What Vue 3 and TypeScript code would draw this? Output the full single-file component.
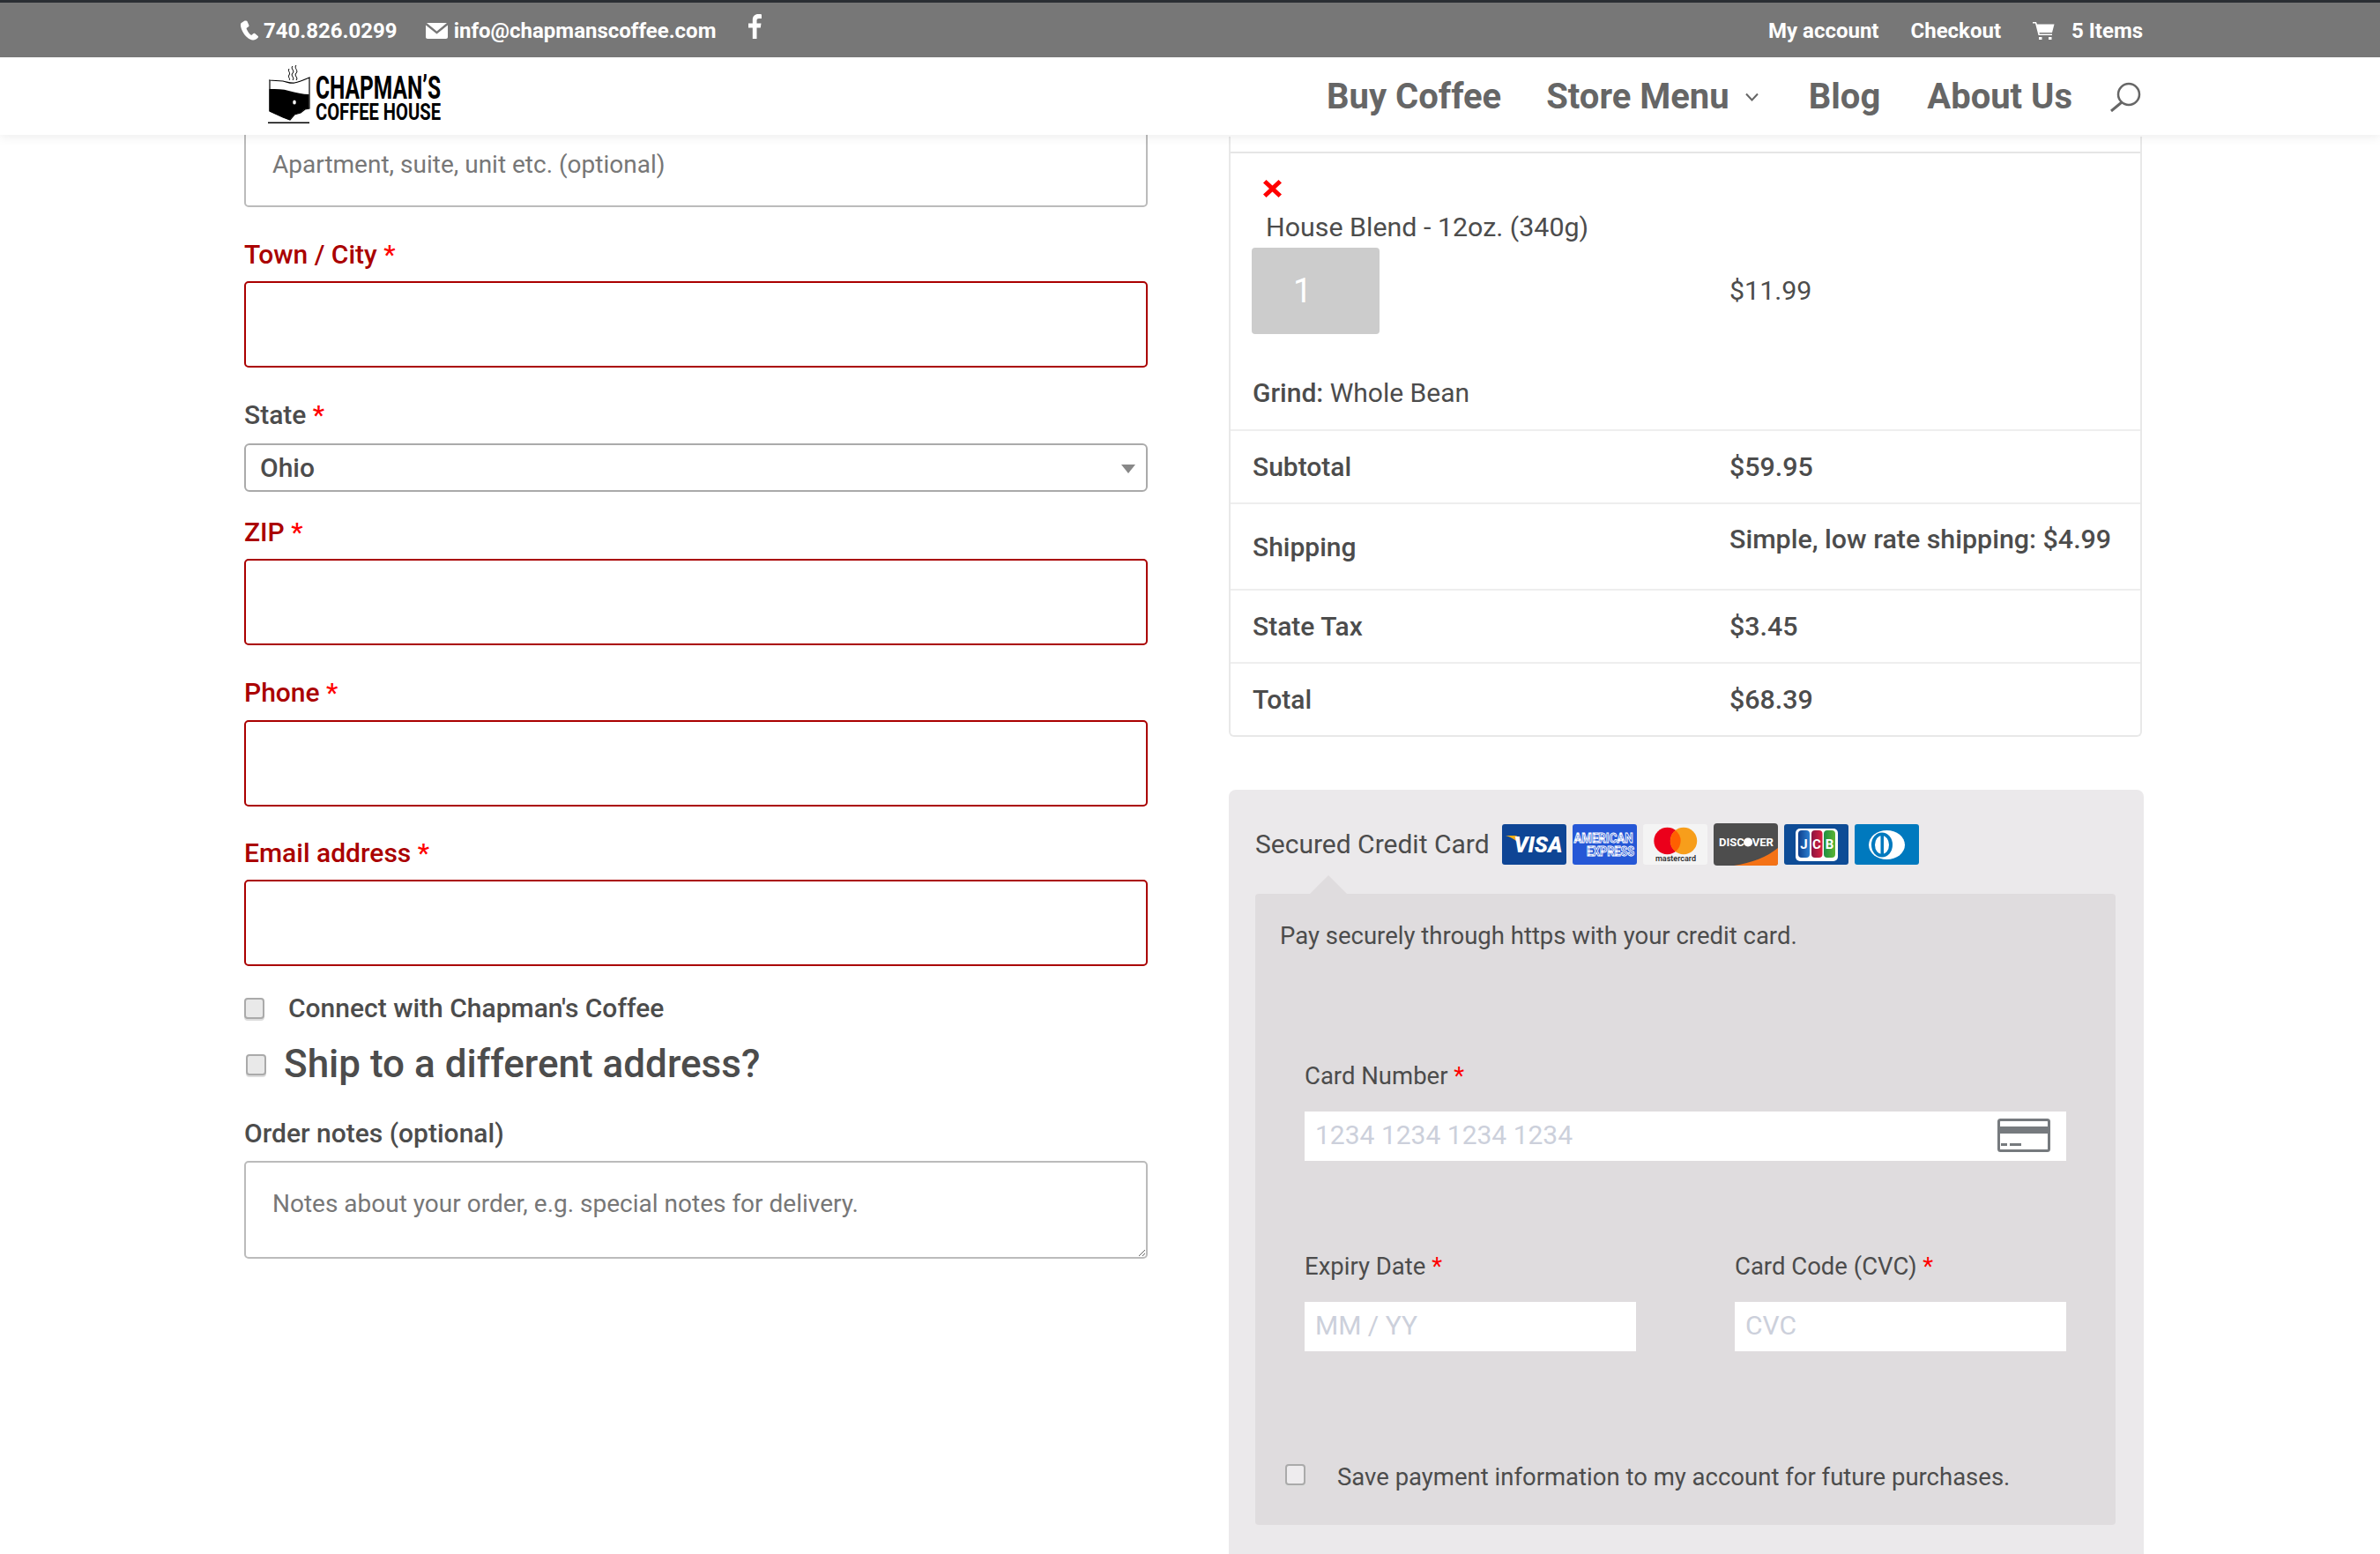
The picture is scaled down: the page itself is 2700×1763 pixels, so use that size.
<script setup lang="ts">
interface Field {
  id: string;
  label: string;
  cls: string;
}

const contactFields: Field[] = [
  { id: 'zip', label: 'ZIP', cls: 'f-zip' },
  { id: 'phone', label: 'Phone', cls: '' },
  { id: 'email', label: 'Email address', cls: 'f-email' },
];

const navLinks = ['Buy Coffee', 'Store Menu', 'Blog', 'About Us'];

const totals = [
  { label: 'Subtotal', value: '$59.95', cls: 'r-sub' },
  { label: 'Shipping', value: 'Simple, low rate shipping: $4.99', cls: 'r-ship' },
  { label: 'State Tax', value: '$3.45', cls: 'r-tax' },
  { label: 'Total', value: '$68.39', cls: 'r-total' },
];
</script>

<template>
  <div class="app">
    <header class="site-head">
      <div class="topbar">
        <div class="top-left">
          <span class="contact phone">
            <svg width="23" height="23" viewBox="0 0 24 24"><path fill="#fff" d="M5 1 1.500 3.500C.5 5 1 9 3.500 13.500 6.500 19 11 23 15.500 23.500c2 .2 4-.8 6-2.800.7-.7.6-1.500-.2-2.200l-3.300-2.800c-.8-.6-1.500-.5-2.200.2l-1.300 1.300c-.5.4-1 .4-1.500 0-2-1.500-4-4.500-5-7-.2-.6 0-1 .5-1.300l1.600-1c.8-.5 1-1.200.7-2.100L9 1.500C8.500.5 6.500 0 5 1Z"/></svg>
            740.826.0299
          </span>
          <span class="contact mail">
            <svg width="25" height="18" viewBox="0 0 25 18"><path fill="#fff" d="M1 0h23l-11.500 9.500L1 0Zm-1 2.500V16c0 1.100.9 2 2 2h21c1.100 0 2-.9 2-2V2.500l-12.500 10L0 2.500Z"/></svg>
            info@chapmanscoffee.com
          </span>
          <svg class="fb" width="16" height="28" viewBox="0 0 16 28"><path fill="#fff" d="M10.500 28V15.500h4.300l.7-5h-5V7.300c0-1.400.4-2.400 2.500-2.400H16V.4C15.500.3 14 .1 12.200.1 8.400.1 5.800 2.400 5.800 6.700v3.800H1v5h4.800V28h4.700Z"/></svg>
        </div>
        <div class="top-right">
          <span>My account</span>
          <span>Checkout</span>
          <span class="cart">
            <svg width="25" height="20" viewBox="0 0 25 20"><path fill="#fff" d="M0 0h4l1 2.500h19.500L22 12H7.500l.3 1.500H22V15H6.500L3 1.500H0V0Z"/><rect x="7" y="17" width="3.500" height="3" fill="#fff"/><rect x="18" y="17" width="3.500" height="3" fill="#fff"/></svg>
            5 Items
          </span>
        </div>
      </div>
      <div class="mainbar">
        <svg class="logo" width="198" height="70" viewBox="0 0 198 70">
          <path fill="none" stroke="#000" stroke-width="1" d="M28 1c-3 3 3 5 0 8s3 5 0 8M32 0c-3 3 3 6 0 9s3 5 0 8M24 4c-2 3 2 4 0 7s2 4 0 6" />
          <path fill="#fff" stroke="#000" stroke-width="1.200" d="M1 17l16 1c5 1 9 3 13 2 5-1 10-3 17-6v35l-5 1-5 4-7 2-5 6-8-3-15-7V17Z" />
          <path fill="#000" d="M1.500 27c8 0 16 0 22 2 8 2 16 4 23 4v16l-5 1-5 4-7 2-5 6-8-3-15-7V27Z" />
          <ellipse cx="30" cy="42" rx="1.800" ry="2.500" fill="#fff" />
          <path fill="#000" d="M0 64.500h47V66H0Z" />
          <text class="logo-a" x="54" y="38" textLength="142" lengthAdjust="spacingAndGlyphs">CHAPMAN’S</text>
          <text class="logo-b" x="54" y="62" textLength="142" lengthAdjust="spacingAndGlyphs">COFFEE HOUSE</text>
        </svg>
        <nav class="nav">
          <a v-for="link in navLinks" :key="link" class="nav-link">
            {{ link }}
            <svg v-if="link === 'Store Menu'" class="chev" width="17" height="10" viewBox="0 0 17 10"><path fill="none" stroke="#666" stroke-width="2" d="m2 1.500 6.500 7 6.500-7" /></svg>
          </a>
          <svg class="search" width="37" height="34" viewBox="0 0 37 34"><circle cx="22" cy="14" r="12" fill="none" stroke="#666" stroke-width="2.500"/><path stroke="#666" stroke-width="3" d="M14 23 2 33"/></svg>
        </nav>
      </div>
    </header>

    <main class="page">
      <section class="billing">
        <input class="text-in apt" placeholder="Apartment, suite, unit etc. (optional)" readonly />

        <div class="field f-town">
          <label class="lbl bad">Town / City <i>*</i></label>
          <input class="text-in bad-in" readonly />
        </div>
        <div class="field f-state">
          <label class="lbl">State <i>*</i></label>
          <div class="select-wrap">
            <select class="sel"><option>Ohio</option></select>
            <span class="sel-arrow"></span>
          </div>
        </div>
        <div v-for="f in contactFields" :key="f.id" class="field" :class="f.cls">
          <label class="lbl bad">{{ f.label }} <i>*</i></label>
          <input class="text-in bad-in" readonly />
        </div>

        <label class="check-row connect"><input type="checkbox" class="cb" />Connect with Chapman's Coffee</label>
        <h3 class="ship"><input type="checkbox" class="cb" />Ship to a different address?</h3>

        <div class="field f-notes">
          <label class="lbl">Order notes (optional)</label>
          <textarea class="notes" placeholder="Notes about your order, e.g. special notes for delivery." readonly></textarea>
        </div>
      </section>

      <section class="order">
        <div class="table">
          <div class="row-item">
            <svg class="remove" width="21" height="20" viewBox="0 0 21 20"><path fill="#f00" d="M0 3.500 3.500 0l7 6.500 7-6.500L21 3.500 14 10l7 6.500-3.500 3.500-7-6.500-7 6.500L0 16.500 7 10 0 3.500Z"/></svg>
            <div class="item-name">House Blend - 12oz. (340g)</div>
            <div class="item-line">
              <div class="qty">1</div>
              <div class="price">$11.99</div>
            </div>
            <div class="grind"><b>Grind:</b> Whole Bean</div>
          </div>
          <div v-for="r in totals" :key="r.label" class="row" :class="r.cls">
            <b class="r-label">{{ r.label }}</b>
            <b class="r-value">{{ r.value }}</b>
          </div>
        </div>

        <div class="pay">
          <div class="pay-head">
            <span class="pay-title">Secured Credit Card</span>
            <div class="cards">
              <svg class="card" viewBox="0 0 73 46"><rect width="73" height="46" rx="3" fill="#0e4595"/><path d="M4 13h11c2 0 3 1 3 3l2 7c-3-4-9-8-16-10Z" fill="#f2ae14"/><text class="t-visa" x="41" y="32" text-anchor="middle" textLength="55" lengthAdjust="spacingAndGlyphs">VISA</text></svg>
              <svg class="card" viewBox="0 0 73 46"><rect width="73" height="46" rx="3" fill="#2557d6"/><text class="t-amex" x="35" y="21" text-anchor="middle" textLength="67" lengthAdjust="spacingAndGlyphs">AMERICAN</text><text class="t-amex" x="43" y="36" text-anchor="middle" textLength="54" lengthAdjust="spacingAndGlyphs">EXPRESS</text></svg>
              <svg class="card" viewBox="0 0 73 46"><rect width="73" height="46" rx="3" fill="#f4f4f4"/><circle cx="27.500" cy="19" r="15.200" fill="#eb001b"/><circle cx="46" cy="19" r="15.200" fill="#f79e1b"/><path d="M36.750 7a15.200 15.200 0 0 1 0 24 15.200 15.200 0 0 1 0-24Z" fill="#ff5f00"/><text class="t-mc" x="37" y="42" text-anchor="middle" textLength="46" lengthAdjust="spacingAndGlyphs">mastercard</text></svg>
              <svg class="card tall" viewBox="0 0 73 48"><rect width="73" height="48" rx="4" fill="#4d4d4d"/><path d="M23 48c20-3 38-10 50-20v17c0 2-1 3-3 3H23Z" fill="#f47216"/><text class="t-disc" x="37" y="26" text-anchor="middle" textLength="62" lengthAdjust="spacingAndGlyphs">DISCOVER</text><circle cx="39" cy="21.500" r="5" fill="#fff"/></svg>
              <svg class="card" viewBox="0 0 73 46"><defs><linearGradient id="jb" x1="0" x2="1"><stop offset="0" stop-color="#0e3f8c"/><stop offset="1" stop-color="#2b7fd0"/></linearGradient><linearGradient id="jr" x1="0" x2="1"><stop offset="0" stop-color="#8c1440"/><stop offset="1" stop-color="#d81f3f"/></linearGradient><linearGradient id="jg" x1="0" x2="1"><stop offset="0" stop-color="#1f8f45"/><stop offset="1" stop-color="#5cb531"/></linearGradient></defs><rect width="73" height="46" rx="3" fill="#0e4c96"/><rect x="13" y="5" width="48" height="37" rx="5" fill="#fff"/><rect x="16" y="7" width="13" height="31" rx="4" fill="url(#jb)"/><rect x="31" y="7" width="12.500" height="31" rx="4" fill="url(#jr)"/><rect x="45" y="7" width="13" height="31" rx="4" fill="url(#jg)"/><text class="t-jcb" y="28" text-anchor="middle" x="22.500 37 51.500">JCB</text></svg>
              <svg class="card" viewBox="0 0 73 46"><rect width="73" height="46" rx="3" fill="#0079be"/><ellipse cx="36.500" cy="23.500" rx="20.500" ry="16.500" fill="#fff"/><ellipse cx="31" cy="23.500" rx="12" ry="14" fill="#0079be"/><ellipse cx="31" cy="23.500" rx="8" ry="10.500" fill="#fff"/><rect x="29.500" y="11" width="3.500" height="25" fill="#0079be"/></svg>
            </div>
          </div>
          <div class="pay-box">
            <p class="pay-note">Pay securely through https with your credit card.</p>
            <div class="cc-num">
              <label class="cc-lbl">Card Number <i>*</i></label>
              <div class="cc-in-wrap">
                <input class="cc-in" placeholder="1234 1234 1234 1234" readonly />
                <svg class="cc-icon" width="60" height="38" viewBox="0 0 60 38"><rect x="1.500" y="1.500" width="57" height="35" rx="2" fill="#fff" stroke="#767a7e" stroke-width="3"/><rect x="2" y="9" width="56" height="8" fill="#767a7e"/><rect x="4" y="28" width="7" height="3" fill="#767a7e"/><rect x="14" y="28" width="13" height="3" fill="#767a7e"/></svg>
              </div>
            </div>
            <div class="cc-pair">
              <div>
                <label class="cc-lbl">Expiry Date <i>*</i></label>
                <input class="cc-in" placeholder="MM / YY" readonly />
              </div>
              <div>
                <label class="cc-lbl">Card Code (CVC) <i>*</i></label>
                <input class="cc-in" placeholder="CVC" readonly />
              </div>
            </div>
            <label class="save"><input type="checkbox" class="cb" />Save payment information to my account for future purchases.</label>
          </div>
        </div>
      </section>
    </main>
  </div>
</template>

<style>
html, body {
  margin: 0;
  background: #fff;
  overflow: hidden;
}
</style>

<style scoped>
.app {
  width: 2700px;
  height: 1763px;
  overflow: hidden;
  font-family: Roboto, "Liberation Sans", sans-serif;
  font-size: 30px;
  color: #4c4c4c;
  display: flex;
  flex-direction: column;
}

.site-head {
  position: relative;
  z-index: 5;
  flex: none;
  box-shadow: 0 2px 12px rgba(0, 0, 0, 0.08);
  background: #fff;
}

.topbar {
  height: 61px;
  border-top: 3px solid #2a2e33;
  background: #777;
  color: #fff;
  font-size: 24px;
  font-weight: 700;
  display: flex;
  justify-content: space-between;
  align-items: center;
  padding: 1px 269px 0 272px;
}

.top-left, .top-right {
  display: flex;
  align-items: center;
}

.contact {
  display: flex;
  align-items: center;
  gap: 4px;
}

.mail {
  margin-left: 32px;
  gap: 7px;
}

.fb {
  margin-left: 36px;
  margin-top: -9px;
}

.top-right {
  gap: 36px;
}

.cart {
  display: flex;
  align-items: center;
  gap: 19px;
}

.mainbar {
  height: 88px;
  display: flex;
  justify-content: space-between;
  align-items: center;
  padding: 0 270px 0 304px;
}

.logo {
  overflow: visible;
}

.logo-a {
  font-size: 36px;
  font-weight: 700;
  fill: #000;
}

.logo-b {
  font-size: 25px;
  font-weight: 700;
  fill: #000;
}

.nav {
  display: flex;
  align-items: center;
  font-size: 40px;
  font-weight: 700;
  color: #666;
  padding-top: 1px;
}

.nav-link {
  margin-right: 53px;
  display: flex;
  align-items: center;
}

.nav-link:first-child {
  margin-right: 51px;
}

.chev {
  margin-left: 17px;
  margin-right: 3px;
}

.search {
  margin-left: -11px;
}

.page {
  flex: 1;
  min-height: 0;
  padding-left: 277px;
  display: grid;
  grid-template-columns: 1025px 1038px;
  column-gap: 92px;
  overflow: hidden;
}

.billing {
  margin-top: -20px;
}

.text-in {
  display: block;
  width: 100%;
  box-sizing: border-box;
  height: 98px;
  border: 2px solid #bbb;
  border-radius: 5px;
  padding: 0 30px;
  font: inherit;
  font-size: 28px;
  color: inherit;
  background: #fff;
  outline: none;
}

.text-in::placeholder, .notes::placeholder {
  color: #777;
  opacity: 1;
}

.apt {
  height: 102px;
  padding-top: 4px;
}

.bad-in {
  border-color: #a00;
}

.field {
  margin-top: 31px;
}

.f-town {
  margin-top: 31px;
}

.f-town .lbl {
  margin-bottom: 8px;
}

.f-state {
  margin-top: 31px;
}

.f-state .lbl {
  margin-bottom: 10px;
}

.f-zip {
  margin-top: 23px;
}

.f-zip .lbl {
  margin-bottom: 8px;
}

.f-email {
  margin-top: 30px;
}

.f-email .lbl {
  margin-bottom: 8px;
}

.f-notes {
  margin-top: 26px;
}

.lbl {
  display: block;
  line-height: 45px;
  margin-bottom: 9px;
  font-weight: 500;
}

.lbl i, .cc-lbl i {
  font-style: normal;
  color: #f00;
}

.lbl.bad {
  color: #a00;
}

.select-wrap {
  position: relative;
}

.sel {
  display: block;
  width: 100%;
  height: 55px;
  box-sizing: border-box;
  appearance: none;
  border: 2px solid #aaa;
  border-radius: 6px;
  padding: 0 16px;
  background: #fff;
  font: inherit;
  font-size: 30px;
  font-weight: 500;
  color: inherit;
}

.sel-arrow {
  position: absolute;
  right: 14px;
  top: 24px;
  border-style: solid;
  border-width: 10px 8px 0;
  border-color: #888 transparent transparent;
}

.cb {
  appearance: none;
  margin: 0;
  flex: none;
  width: 23px;
  height: 24px;
  box-sizing: border-box;
  border: 2px solid #aaa;
  border-radius: 4px;
  background: #e9e9e9;
  box-shadow: 0 2px 0 #ddd;
}

.check-row {
  display: flex;
  align-items: center;
  gap: 27px;
  margin-top: 31px;
  font-weight: 500;
  line-height: 34px;
}

.ship {
  display: flex;
  align-items: center;
  gap: 20px;
  margin: 16px 0 0 2px;
  font-size: 44px;
  line-height: 60px;
  font-weight: 500;
}

.ship .cb {
  margin-top: 2px;
}

.notes {
  display: block;
  width: 100%;
  height: 111px;
  box-sizing: border-box;
  border: 2px solid #bbb;
  border-radius: 5px;
  padding: 30px;
  font: inherit;
  color: inherit;
  font-size: 28px;
  line-height: 34px;
  font-weight: 400;
  outline: none;
}

.table {
  border: 2px solid #e8e8e8;
  border-top: 0;
  border-radius: 0 0 6px 6px;
  padding-top: 17px;
  width: 1032px;
  margin-top: 2px;
}

.row-item {
  border-top: 2px solid #e5e5e5;
  height: 313px;
  padding-left: 25px;
  position: relative;
}

.remove {
  display: block;
  margin: 30px 0 0 12px;
}

.item-name {
  margin: 14px 0 0 15px;
  line-height: 40px;
  font-size: 30.4px;
}

.item-line {
  display: grid;
  grid-template-columns: 541px 1fr;
  align-items: center;
  margin-top: 3px;
}

.qty {
  width: 145px;
  height: 98px;
  background: #ccc;
  border-radius: 4px;
  color: #fff;
  font-size: 38px;
  line-height: 98px;
  padding-left: 47px;
  box-sizing: border-box;
  margin-left: -1px;
}

.price {
  font-size: 30.4px;
  margin-top: -2px;
}

.grind {
  margin-top: 47px;
  line-height: 40px;
}

.grind b, .row b {
  font-weight: 500;
}

.row {
  border-top: 2px solid #eee;
  display: grid;
  grid-template-columns: 541px 1fr;
  padding-left: 25px;
  align-items: center;
  height: 81px;
}

.r-value {
  font-size: 30.4px;
}

.r-ship {
  height: 96px;
}

.r-ship .r-value {
  align-self: start;
  margin-top: 22px;
}

.pay {
  margin-top: 60px;
  background: #ebe9eb;
  border-radius: 8px;
  padding: 0 32px 40px 30px;
  height: 900px;
  box-sizing: border-box;
}

.pay-head {
  display: flex;
  align-items: center;
  padding-top: 39px;
  padding-bottom: 33px;
  height: 46px;
}

.pay-title {
  font-size: 30px;
  margin-right: 14px;
  margin-top: -2px;
}

.cards {
  display: flex;
  gap: 7px;
}

.card {
  display: block;
  width: 73px;
  height: 46px;
}

.card.tall {
  height: 48px;
  margin-top: -1px;
}

.t-visa {
  font: italic 900 26px Roboto, sans-serif;
  fill: #fff;
}

.t-amex {
  font: 700 14px Roboto, sans-serif;
  fill: #2557d6;
  stroke: #fff;
  stroke-width: 0.9px;
}

.t-mc {
  font: 500 9.5px Roboto, sans-serif;
  fill: #222;
}

.t-disc {
  font: 700 12.5px Roboto, sans-serif;
  fill: #fff;
}

.t-jcb {
  font: 700 15px Roboto, sans-serif;
  fill: #fff;
}

.pay-box {
  position: relative;
  background: #dfdcde;
  border-radius: 4px;
  height: 716px;
  padding: 0 32px 0 28px;
  box-sizing: border-box;
  font-size: 27.5px;
}

.pay-box::before {
  content: "";
  position: absolute;
  left: 62px;
  top: -21px;
  border-style: solid;
  border-width: 0 21px 21px;
  border-color: transparent transparent #dfdcde;
}

.pay-note {
  margin: 0;
  padding-top: 29px;
  line-height: 38px;
}

.cc-num, .cc-pair {
  margin-left: 28px;
  margin-right: 24px;
}

.cc-num {
  margin-top: 122px;
}

.cc-lbl {
  display: block;
  line-height: 36px;
  margin-bottom: 22px;
}

.cc-in-wrap {
  position: relative;
}

.cc-in {
  display: block;
  width: 100%;
  height: 56px;
  box-sizing: border-box;
  border: 0;
  background: #fff;
  padding: 0 12px 3px;
  font: inherit;
  font-size: 30px;
  outline: none;
}

.cc-in::placeholder {
  color: #ccd0db;
  opacity: 1;
}

.cc-icon {
  position: absolute;
  right: 18px;
  top: 8px;
}

.cc-pair {
  display: grid;
  grid-template-columns: 376px 376px;
  justify-content: space-between;
  margin-top: 102px;
}

.save {
  display: flex;
  align-items: center;
  gap: 36px;
  margin: 125px 0 0 6px;
  line-height: 36px;
}

.save .cb {
  margin-top: -6px;
  background: #eeecee;
}
</style>
